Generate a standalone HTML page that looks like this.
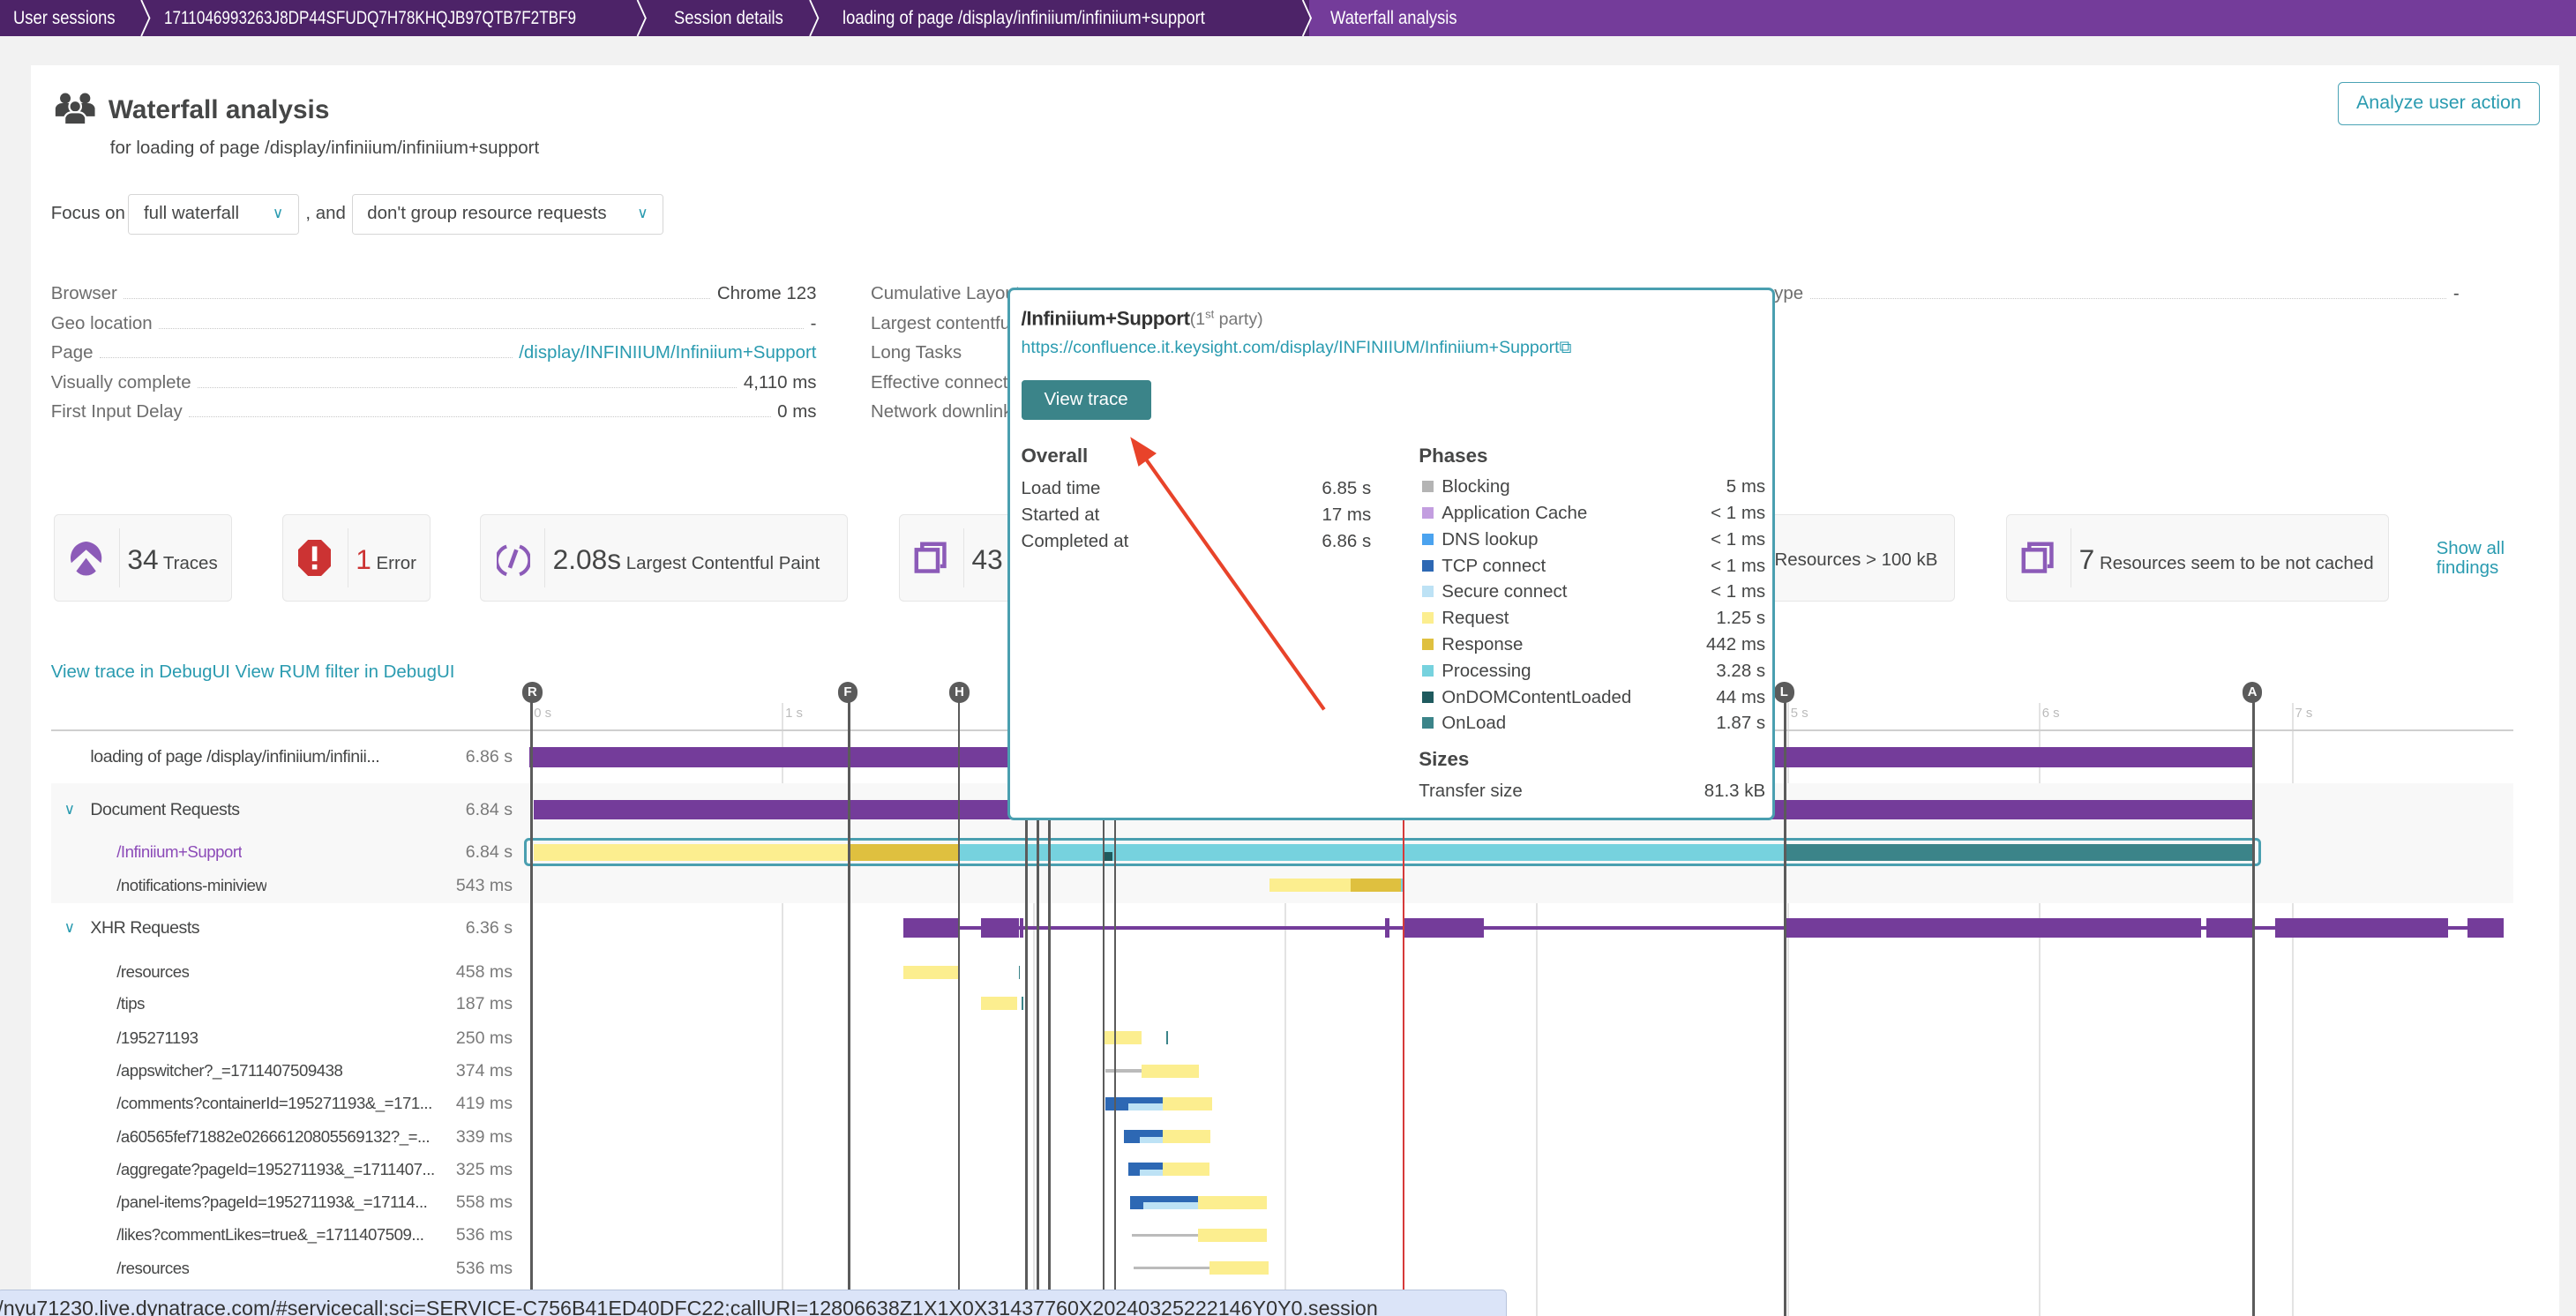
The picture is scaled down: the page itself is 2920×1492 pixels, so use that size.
<!DOCTYPE html>
<html><head><meta charset="utf-8">
<style>
html,body{margin:0;padding:0;background:#f2f2f2;overflow:hidden;width:2920px;height:1492px}
#w{position:relative;width:1568px;height:802px;zoom:1.8622;font-family:"Liberation Sans",sans-serif;color:#454646;font-size:11px;overflow:hidden;background:#f2f2f2}
.a{position:absolute;white-space:nowrap}
.t{line-height:14px}
.bc{top:0;height:22px;line-height:22px;color:#fff;font-size:11.5px;transform:scaleX(0.86);transform-origin:left center}
.r{text-align:right}
.lbl{color:#6d6d6d}
.ir{position:absolute;display:flex;align-items:baseline;line-height:14px;height:14px;white-space:nowrap}
.ir .l{color:#6d6d6d}
.ir .d{flex:1;border-bottom:1px dotted #c9c9c9;margin:0 4px;height:9px}
.card{position:absolute;top:313px;height:53px;background:#f8f8f8;border:1px solid #e6e6e6;border-radius:3px;box-sizing:border-box}
.card .sep{position:absolute;left:39px;top:8px;bottom:8px;border-left:1px solid #e4e4e4}
.num{font-size:17px;color:#454646}
.vl{position:absolute;top:425px;height:380px;width:1.5px;background:#5b5b5b}
.gl{position:absolute;top:428px;height:380px;width:1px;background:#e3e3e3}
.mk{position:absolute;top:415px;width:12px;height:13px;border-radius:6px;background:#5b5b5b;color:#fff;font-size:8px;line-height:13px;text-align:center;font-weight:bold}
.tick{position:absolute;top:430px;font-size:8px;color:#bbb}
.b{position:absolute}
.p{background:#743c9a}
.y{background:#fcee8f}
.g{background:#dfc03f}
.c{background:#76d2de}
.dt{background:#3b8489}
.row{position:absolute;left:31px;width:290px;height:14px;line-height:14px;font-size:10.5px}
.row .n{position:absolute;left:40px;max-width:200px;overflow:hidden;font-size:10px;letter-spacing:-0.25px}
.row .v{position:absolute;right:9px;color:#7a7a7a}
.pop{position:absolute;left:613px;top:175px;width:464px;height:321px;background:#fff;border:2px solid #4a9fb0;border-radius:4px;z-index:5}
.pr{position:absolute;font-size:11px;line-height:14px;white-space:nowrap}
.sw{display:inline-block;width:7px;height:7px;margin-right:5px;vertical-align:0px}
</style></head><body><div id="w">
<div class="a" style="left:0;top:0;width:800px;height:22px;background:#4d2368"></div>
<div class="a" style="left:797px;top:0;width:771px;height:22px;background:#743c9a"></div>
<svg class="a" style="left:0;top:0" width="800" height="22">
<g fill="none" stroke="#fff" stroke-width="1"><path d="M86 0 L91 11 L86 22"/><path d="M388 0 L393 11 L388 22"/><path d="M493 0 L498 11 L493 22"/><path d="M793 0 L798 11 L793 22"/></g></svg>
<div class="a bc" style="left:8px">User sessions</div>
<div class="a bc" style="left:100px;transform:scaleX(0.8)">1711046993263J8DP44SFUDQ7H78KHQJB97QTB7F2TBF9</div>
<div class="a bc" style="left:410px">Session details</div>
<div class="a bc" style="left:513px">loading of page /display/infiniium/infiniium+support</div>
<div class="a bc" style="left:810px">Waterfall analysis</div>
<div class="a" style="left:19px;top:40px;width:1539px;height:770px;background:#fff"></div>
<svg class="a" style="left:33px;top:56px" width="26" height="20" viewBox="0 0 26 20" fill="#454646">
<circle cx="7" cy="4" r="3.2"/><circle cx="19" cy="4" r="3.2"/><path d="M1 15 V10 a4 4 0 0 1 4-3 h4 a4 4 0 0 1 4 3 V15z"/><path d="M13 15 V10 a4 4 0 0 1 4-3 h4 a4 4 0 0 1 4 3 V15z"/>
<circle cx="13" cy="9" r="3.6" stroke="#fff" stroke-width="1.2"/><path d="M6.5 20 V16 a4.5 4.5 0 0 1 4.5-3.5 h4 a4.5 4.5 0 0 1 4.5 3.5 V20z" stroke="#fff" stroke-width="1.2"/></svg>
<div class="a" style="left:66px;top:58px;font-size:16px;font-weight:bold;color:#454646">Waterfall analysis</div>
<div class="a t" style="left:67px;top:83px;font-size:11px">for loading of page /display/infiniium/infiniium+support</div>
<div class="a" style="left:1423px;top:50px;width:123px;height:26px;border:1px solid #4aa3b5;border-radius:3px;box-sizing:border-box;color:#2a9bb0;font-size:11.5px;line-height:24px;text-align:center">Analyze user action</div>
<div class="a t" style="left:31px;top:123px">Focus on</div>
<div class="a" style="left:78px;top:118px;width:104px;height:25px;border:1px solid #d6d6d6;border-radius:2px;box-sizing:border-box;line-height:23px;padding-left:9px">full waterfall<span style="position:absolute;right:9px;color:#2a9bb0;font-size:9px">&#8744;</span></div>
<div class="a t" style="left:186px;top:123px">, and</div>
<div class="a" style="left:214px;top:118px;width:190px;height:25px;border:1px solid #d6d6d6;border-radius:2px;box-sizing:border-box;line-height:23px;padding-left:9px">don't group resource requests<span style="position:absolute;right:9px;color:#2a9bb0;font-size:9px">&#8744;</span></div>
<div class="ir" style="left:31px;top:172px;width:466px"><span class="l">Browser</span><span class="d"></span><span>Chrome 123</span></div>
<div class="ir" style="left:31px;top:190px;width:466px"><span class="l">Geo location</span><span class="d"></span><span>-</span></div>
<div class="ir" style="left:31px;top:208px;width:466px"><span class="l">Page</span><span class="d"></span><span style="color:#2a9bb0">/display/INFINIIUM/Infiniium+Support</span></div>
<div class="ir" style="left:31px;top:226px;width:466px"><span class="l">Visually complete</span><span class="d"></span><span>4,110 ms</span></div>
<div class="ir" style="left:31px;top:244px;width:466px"><span class="l">First Input Delay</span><span class="d"></span><span>0 ms</span></div>
<div class="a t lbl" style="left:530px;top:172px">Cumulative Layout</div>
<div class="a t lbl" style="left:530px;top:190px">Largest contentful</div>
<div class="a t lbl" style="left:530px;top:208px">Long Tasks</div>
<div class="a t lbl" style="left:530px;top:226px">Effective connection</div>
<div class="a t lbl" style="left:530px;top:244px">Network downlink</div>
<div class="ir" style="left:1080px;top:172px;width:417px"><span class="l">ype</span><span class="d"></span><span>-</span></div>
<div class="card" style="left:33px;width:108px"><div class="sep"></div>
<svg class="a" style="left:9px;top:16px" width="20" height="22" viewBox="0 0 20 22"><path d="M10 0 A10 10 0 0 1 19 13 L10 5 L1 13 A10 10 0 0 1 10 0Z M10 10 L16 18 A8 8 0 0 1 4 18Z" fill="#8c5bb8"/></svg>
<div class="a" style="left:44px;top:17px"><span class="num">34</span> Traces</div></div>
<div class="card" style="left:172px;width:90px"><div class="sep"></div>
<svg class="a" style="left:9px;top:15px" width="20" height="22" viewBox="0 0 20 22"><path d="M6 0 H14 L20 6 V16 L14 22 H6 L0 16 V6Z" fill="#cc3333"/><rect x="8.5" y="4" width="3" height="9" fill="#fff"/><rect x="8.5" y="15" width="3" height="3" fill="#fff"/></svg>
<div class="a" style="left:44px;top:17px"><span class="num" style="color:#cc3333">1</span> Error</div></div>
<div class="card" style="left:292px;width:224px"><div class="sep"></div>
<svg class="a" style="left:10px;top:16px" width="20" height="22" viewBox="0 0 20 22" fill="none" stroke="#8c5bb8" stroke-width="2.2"><path d="M6 20 A9 9 0 0 1 6 3"/><path d="M14 3 A9 9 0 0 1 14 20"/><path d="M12 5 L8 16" stroke-width="2.5"/></svg>
<div class="a" style="left:44px;top:17px"><span class="num">2.08s</span> Largest Contentful Paint</div></div>
<div class="card" style="left:547px;width:643px"><div class="sep"></div>
<svg class="a" style="left:9px;top:16px" width="20" height="20" viewBox="0 0 20 20" fill="none" stroke="#8c5bb8" stroke-width="2.4"><path d="M5 4 V1.5 H18.5 V15 H16"/><rect x="1.5" y="5" width="13" height="13"/></svg>
<div class="a" style="left:44px;top:17px"><span class="num">43</span></div>
<div class="a" style="right:10px;top:21px">Resources &gt; 100 kB</div></div>
<div class="card" style="left:1221px;width:233px"><div class="sep"></div>
<svg class="a" style="left:9px;top:16px" width="20" height="20" viewBox="0 0 20 20" fill="none" stroke="#8c5bb8" stroke-width="2.4"><path d="M5 4 V1.5 H18.5 V15 H16"/><rect x="1.5" y="5" width="13" height="13"/></svg>
<div class="a" style="left:44px;top:17px"><span class="num">7</span> Resources seem to be not cached</div></div>
<div class="a" style="left:1483px;top:328px;color:#2a9bb0;line-height:12px">Show all<br>findings</div>
<div class="a t" style="left:31px;top:402px;color:#2a9bb0">View trace in DebugUI View RUM filter in DebugUI</div>
<div class="gl" style="left:323px"></div><div class="gl" style="left:476px"></div><div class="gl" style="left:629px"></div><div class="gl" style="left:782px"></div><div class="gl" style="left:935px"></div><div class="gl" style="left:1088px"></div><div class="gl" style="left:1241px"></div><div class="gl" style="left:1395px"></div>
<div class="tick" style="left:325px">0 s</div><div class="tick" style="left:478px">1 s</div><div class="tick" style="left:1090px">5 s</div><div class="tick" style="left:1243px">6 s</div><div class="tick" style="left:1397px">7 s</div>
<div class="a" style="left:31px;top:444px;width:1499px;height:1px;background:#cfcfcf"></div>
<div class="a" style="left:31px;top:477px;width:1499px;height:73px;background:#f8f8f8"></div>
<div class="row" style="top:454px"><span class="n" style="left:24px;max-width:215px;font-size:10.5px">loading of page /display/infiniium/infinii...</span><span class="v">6.86 s</span></div>
<div class="b p" style="left:322px;top:455px;width:1049px;height:12px"></div>
<div class="row" style="top:486px"><span style="position:absolute;left:8px;color:#2a9bb0;font-size:9px">&#8744;</span><span class="n" style="left:24px;font-size:10.5px">Document Requests</span><span class="v">6.84 s</span></div>
<div class="b p" style="left:325px;top:487px;width:1046px;height:12px"></div>
<div class="row" style="top:512px"><span class="n" style="color:#8c4bb8">/Infiniium+Support</span><span class="v">6.84 s</span></div>
<div class="b y" style="left:325px;top:514px;width:191px;height:10px"></div>
<div class="b g" style="left:516px;top:514px;width:68px;height:10px"></div>
<div class="b c" style="left:584px;top:514px;width:502px;height:10px"></div>
<div class="b" style="left:671px;top:519px;width:6px;height:5px;background:#1f5a5e"></div>
<div class="b dt" style="left:1086px;top:514px;width:285px;height:10px"></div>
<div class="b" style="left:319px;top:510px;width:1054px;height:14px;border:2px solid #4a9fb0;border-radius:3px"></div>
<div class="row" style="top:532px"><span class="n">/notifications-miniview</span><span class="v">543 ms</span></div>
<div class="b y" style="left:773px;top:535px;width:49px;height:8px"></div><div class="b g" style="left:822px;top:535px;width:31px;height:8px"></div><div class="b c" style="left:853px;top:535px;width:2px;height:8px"></div>
<div class="row" style="top:558px"><span style="position:absolute;left:8px;color:#2a9bb0;font-size:9px">&#8744;</span><span class="n" style="left:24px;font-size:10.5px">XHR Requests</span><span class="v">6.36 s</span></div>
<div class="b p" style="left:550px;top:564px;width:974px;height:2px"></div>
<div class="b p" style="left:550px;top:559px;width:34px;height:12px"></div>
<div class="b p" style="left:597px;top:559px;width:23px;height:12px"></div>
<div class="b p" style="left:621px;top:559px;width:2px;height:12px"></div>
<div class="b p" style="left:843px;top:559px;width:3px;height:12px"></div>
<div class="b p" style="left:855px;top:559px;width:48px;height:12px"></div>
<div class="b p" style="left:1086px;top:559px;width:254px;height:12px"></div>
<div class="b p" style="left:1343px;top:559px;width:28px;height:12px"></div>
<div class="b p" style="left:1385px;top:559px;width:105px;height:12px"></div>
<div class="b p" style="left:1502px;top:559px;width:22px;height:12px"></div>
<div class="row" style="top:585px"><span class="n">/resources</span><span class="v">458 ms</span></div>
<div class="b y" style="left:550px;top:588px;width:34px;height:8px"></div><div class="b dt" style="left:620px;top:588px;width:1px;height:8px"></div>
<div class="row" style="top:604px"><span class="n">/tips</span><span class="v">187 ms</span></div>
<div class="b y" style="left:597px;top:607px;width:22px;height:8px"></div><div class="b dt" style="left:622px;top:607px;width:1px;height:8px"></div>
<div class="row" style="top:625px"><span class="n">/195271193</span><span class="v">250 ms</span></div>
<div class="b y" style="left:672px;top:628px;width:23px;height:8px"></div><div class="b dt" style="left:710px;top:628px;width:1px;height:8px"></div>
<div class="row" style="top:645px"><span class="n">/appswitcher?_=1711407509438</span><span class="v">374 ms</span></div>
<div class="b" style="left:673px;top:651px;width:22px;height:2px;background:#bbb"></div><div class="b y" style="left:695px;top:648px;width:35px;height:8px"></div>
<div class="row" style="top:665px"><span class="n">/comments?containerId=195271193&amp;_=171...</span><span class="v">419 ms</span></div>
<div class="b" style="left:673px;top:668px;width:35px;height:4px;background:#2d68b4"></div><div class="b" style="left:673px;top:672px;width:35px;height:4px;background:#bde2f5"></div><div class="b" style="left:673px;top:668px;width:14px;height:8px;background:#2d68b4"></div><div class="b y" style="left:708px;top:668px;width:30px;height:8px"></div>
<div class="row" style="top:685px"><span class="n">/a60565fef71882e02666120805569132?_=...</span><span class="v">339 ms</span></div>
<div class="b" style="left:684px;top:688px;width:24px;height:4px;background:#2d68b4"></div><div class="b" style="left:684px;top:692px;width:24px;height:4px;background:#bde2f5"></div><div class="b" style="left:684px;top:688px;width:10px;height:8px;background:#2d68b4"></div><div class="b y" style="left:708px;top:688px;width:29px;height:8px"></div>
<div class="row" style="top:705px"><span class="n">/aggregate?pageId=195271193&amp;_=1711407...</span><span class="v">325 ms</span></div>
<div class="b" style="left:687px;top:708px;width:21px;height:4px;background:#2d68b4"></div><div class="b" style="left:687px;top:712px;width:21px;height:4px;background:#bde2f5"></div><div class="b" style="left:687px;top:708px;width:7px;height:8px;background:#2d68b4"></div><div class="b y" style="left:708px;top:708px;width:28px;height:8px"></div>
<div class="row" style="top:725px"><span class="n">/panel-items?pageId=195271193&amp;_=17114...</span><span class="v">558 ms</span></div>
<div class="b" style="left:688px;top:728px;width:41px;height:4px;background:#2d68b4"></div><div class="b" style="left:688px;top:732px;width:41px;height:4px;background:#bde2f5"></div><div class="b" style="left:688px;top:728px;width:8px;height:8px;background:#2d68b4"></div><div class="b y" style="left:729px;top:728px;width:42px;height:8px"></div>
<div class="row" style="top:745px"><span class="n">/likes?commentLikes=true&amp;_=1711407509...</span><span class="v">536 ms</span></div>
<div class="b" style="left:689px;top:751px;width:40px;height:2px;background:#bbb"></div><div class="b y" style="left:729px;top:748px;width:42px;height:8px"></div>
<div class="row" style="top:765px"><span class="n">/resources</span><span class="v">536 ms</span></div>
<div class="b" style="left:690px;top:771px;width:46px;height:2px;background:#bbb"></div><div class="b y" style="left:736px;top:768px;width:36px;height:8px"></div>
<div class="vl" style="left:323px"></div><div class="vl" style="left:516px"></div><div class="vl" style="left:583px"></div>
<div class="vl" style="left:624px"></div><div class="vl" style="left:631px"></div><div class="vl" style="left:638px"></div>
<div class="vl" style="left:671px"></div><div class="vl" style="left:678px"></div>
<div class="vl" style="left:854px;background:#d63a3a;width:1px"></div>
<div class="vl" style="left:1086px"></div><div class="vl" style="left:1371px"></div>
<div class="mk" style="left:318px">R</div><div class="mk" style="left:510px">F</div><div class="mk" style="left:578px">H</div><div class="mk" style="left:1080px">L</div><div class="mk" style="left:1365px">A</div>
<div class="pop">
<div class="pr" style="left:7px;top:8px"><b style="font-size:12px;color:#333;letter-spacing:-0.2px">/Infiniium+Support</b><span style="color:#777;font-size:10.5px">(1<sup style="font-size:7px">st</sup> party)</span></div>
<div class="pr" style="left:7px;top:28px;color:#2a9bb0;font-size:10.5px">https://confluence.it.keysight.com/display/INFINIIUM/Infiniium+Support&#x29C9;</div>
<div class="a" style="left:7px;top:55px;width:79px;height:24px;background:#3b8489;border-radius:2px;color:#fff;text-align:center;line-height:24px;font-size:11px">View trace</div>
<div class="pr" style="left:7px;top:94px;font-weight:bold;font-size:12px">Overall</div>
<div class="pr" style="left:7px;top:114px">Load time</div><div class="pr" style="right:244px;top:114px">6.85 s</div>
<div class="pr" style="left:7px;top:130px">Started at</div><div class="pr" style="right:244px;top:130px">17 ms</div>
<div class="pr" style="left:7px;top:146px">Completed at</div><div class="pr" style="right:244px;top:146px">6.86 s</div>
<div class="pr" style="left:249px;top:94px;font-weight:bold;font-size:12px">Phases</div>
<div class="pr" style="left:251px;top:113px"><span class="sw" style="background:#b4b4b4"></span>Blocking</div><div class="pr" style="right:4px;top:113px">5 ms</div>
<div class="pr" style="left:251px;top:129px"><span class="sw" style="background:#c39ee0"></span>Application Cache</div><div class="pr" style="right:4px;top:129px">&lt; 1 ms</div>
<div class="pr" style="left:251px;top:145px"><span class="sw" style="background:#4ba3ef"></span>DNS lookup</div><div class="pr" style="right:4px;top:145px">&lt; 1 ms</div>
<div class="pr" style="left:251px;top:161px"><span class="sw" style="background:#2d68b4"></span>TCP connect</div><div class="pr" style="right:4px;top:161px">&lt; 1 ms</div>
<div class="pr" style="left:251px;top:177px"><span class="sw" style="background:#bde2f5"></span>Secure connect</div><div class="pr" style="right:4px;top:177px">&lt; 1 ms</div>
<div class="pr" style="left:251px;top:193px"><span class="sw" style="background:#fcee8f"></span>Request</div><div class="pr" style="right:4px;top:193px">1.25 s</div>
<div class="pr" style="left:251px;top:209px"><span class="sw" style="background:#dfc03f"></span>Response</div><div class="pr" style="right:4px;top:209px">442 ms</div>
<div class="pr" style="left:251px;top:225px"><span class="sw" style="background:#76d2de"></span>Processing</div><div class="pr" style="right:4px;top:225px">3.28 s</div>
<div class="pr" style="left:251px;top:241px"><span class="sw" style="background:#1f5a5e"></span>OnDOMContentLoaded</div><div class="pr" style="right:4px;top:241px">44 ms</div>
<div class="pr" style="left:251px;top:257px"><span class="sw" style="background:#3b8489"></span>OnLoad</div><div class="pr" style="right:4px;top:257px">1.87 s</div>
<div class="pr" style="left:249px;top:279px;font-weight:bold;font-size:12px">Sizes</div>
<div class="pr" style="left:249px;top:298px">Transfer size</div><div class="pr" style="right:4px;top:298px">81.3 kB</div>
</div>
<svg class="a" style="left:0;top:0;z-index:6" width="1568" height="802"><path d="M806 432 L695 276" stroke="#e8432a" stroke-width="2.2" fill="none"/><path d="M688 266 L704 276 L693 284Z" fill="#e8432a"/></svg>
<div class="a" style="left:-2px;top:785px;width:918px;height:20px;background:#dbe4f8;border:1px solid #b8c4dc;border-radius:3px;z-index:7;font-size:12.5px;line-height:22px;color:#333;overflow:hidden">/nyu71230.live.dynatrace.com/#servicecall;sci=SERVICE-C756B41ED40DFC22;callURI=12806638Z1X1X0X31437760X20240325222146Y0Y0.session</div>
</div></body></html>
